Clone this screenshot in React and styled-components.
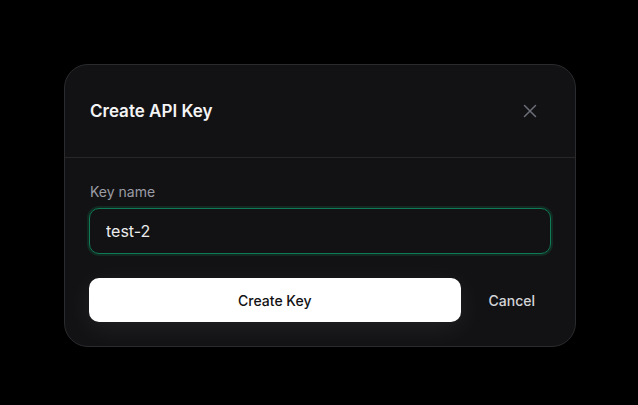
import { useState } from "react";
import styled, { createGlobalStyle } from "styled-components";

const GlobalStyle = createGlobalStyle`
  html, body {
    margin: 0;
    padding: 0;
    background: #000;
  }
  body {
    font-family: Inter, "Noto Sans", sans-serif;
    -webkit-font-smoothing: antialiased;
  }
`;

const Page = styled.div`
  width: 638px;
  height: 405px;
  box-sizing: border-box;
  padding: 64px 0 0 64px;
`;

const Dialog = styled.div`
  width: 512px;
  box-sizing: border-box;
  background: #121214;
  border: 1px solid #2a2b2e;
  border-radius: 24px;
  overflow: hidden;
`;

const Header = styled.div`
  display: flex;
  align-items: center;
  justify-content: space-between;
  padding: 32px 32px 32px 25px;
  border-bottom: 1px solid #26272a;
`;

const Title = styled.h2`
  margin: 0;
  font-size: 17px;
  line-height: 28px;
  font-weight: 600;
  color: #f4f4f5;
`;

const CloseButton = styled.button`
  display: flex;
  align-items: center;
  justify-content: center;
  width: 28px;
  height: 28px;
  padding: 0;
  border: none;
  background: transparent;
  color: #6b6e78;
  cursor: pointer;
  margin-right: -1px;
`;

const Body = styled.div`
  display: flex;
  flex-direction: column;
  padding: 24px;
`;

const Label = styled.label`
  font-size: 14px;
  line-height: 20px;
  color: #9b9ca5;
  margin-bottom: 6px;
  padding-left: 1px;
`;

const Input = styled.input`
  box-sizing: border-box;
  height: 46px;
  width: 100%;
  padding: 0 16px;
  font-family: inherit;
  font-size: 16px;
  color: #ececee;
  background: #121214;
  border: 1px solid #0f7a55;
  border-radius: 10px;
  box-shadow: 0 0 0 2px rgba(16, 122, 85, 0.22);
  outline: none;
`;

const Actions = styled.div`
  display: flex;
  align-items: center;
  gap: 12px;
  margin-top: 24px;
`;

const Button = styled.button`
  height: 44px;
  border: none;
  border-radius: 10px;
  font-family: inherit;
  font-size: 14px;
  font-weight: 500;
  cursor: pointer;
  padding: 0 16px;
  background: ${(p) => (p.$primary ? "#ffffff" : "transparent")};
  color: ${(p) => (p.$primary ? "#111113" : "#d4d4d8")};
  flex: ${(p) => (p.$primary ? "1" : "none")};
  box-shadow: ${(p) =>
    p.$primary ? "0 6px 28px rgba(255, 255, 255, 0.07)" : "none"};
`;

const XIcon = () => (
  <svg width="14" height="14" viewBox="0 0 14 14" fill="none">
    <path
      d="M1.5 1.5l11 11M12.5 1.5l-11 11"
      stroke="currentColor"
      strokeWidth="1.5"
      strokeLinecap="round"
    />
  </svg>
);

export default function App() {
  const [name, setName] = useState("test-2");

  return (
    <>
      <GlobalStyle />
      <Page>
        <Dialog>
          <Header>
            <Title>Create API Key</Title>
            <CloseButton aria-label="Close">
              <XIcon />
            </CloseButton>
          </Header>
          <Body>
            <Label htmlFor="key-name">Key name</Label>
            <Input
              id="key-name"
              value={name}
              onChange={(e) => setName(e.target.value)}
            />
            <Actions>
              <Button $primary>Create Key</Button>
              <Button>Cancel</Button>
            </Actions>
          </Body>
        </Dialog>
      </Page>
    </>
  );
}
